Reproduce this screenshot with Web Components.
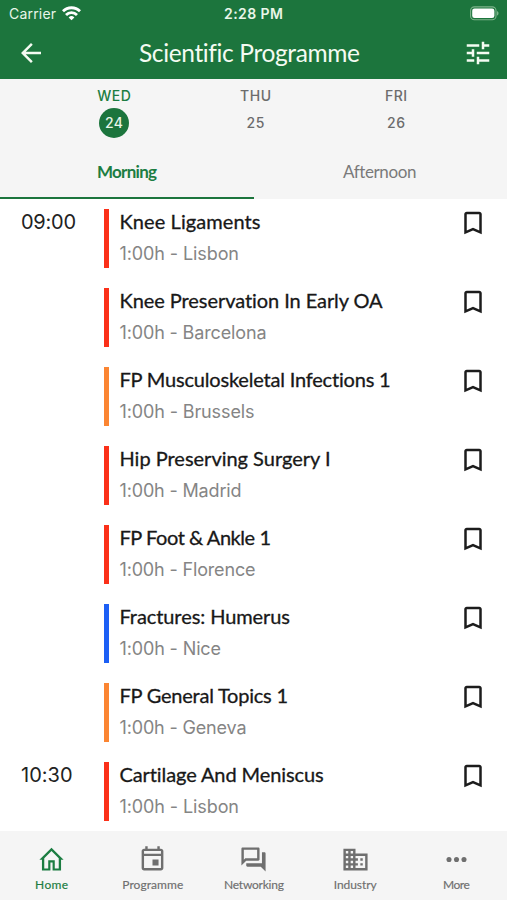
<!DOCTYPE html>
<html lang="en">
<head>
<meta charset="utf-8">
<title>Scientific Programme</title>
<style>
html,body{margin:0;height:900px;overflow:hidden;background:#fff}
body{font-family:Lato,"Liberation Sans",sans-serif}
</style>
</head>
<body>
<programme-app></programme-app>
<script>
const define = (name, html, setup) => customElements.define(name, class extends HTMLElement {
  connectedCallback() {
    if (this.shadowRoot) return;
    const root = this.attachShadow({mode: 'open'});
    root.innerHTML = typeof html === 'function' ? html(this) : html;
    if (setup) setup(this, root);
  }
});

/* A single line of text, tracked so that its advance equals the "w" attribute. */
define('fit-text', `<style>:host{display:inline-block;white-space:nowrap}span{display:inline-block;white-space:nowrap}</style><span></span>`, (el, root) => {
  const s = root.querySelector('span');
  s.textContent = el.getAttribute('text');
  const w = parseFloat(el.getAttribute('w'));
  const n = s.getBoundingClientRect().width;
  s.style.letterSpacing = ((w - n) / (s.textContent.length - 1)) + 'px';
  el.style.width = w + 'px';
});

const icons = {
  back: '<path d="M20 11H7.8l5.6-5.6L12 4l-8 8 8 8 1.4-1.4L7.8 13H20z"/>',
  tune: '<path d="M3 17v2h6v-2H3zM3 5v2h10V5H3zm10 16v-2h8v-2h-8v-2h-2v6h2zM7 9v2H3v2h4v2h2V9H7zm14 4v-2H11v2h10zm-6-4h2V7h4V5h-4V3h-2v6z"/>',
  bookmark: '<path d="M17 3H7c-1.100 0-2 .9-2 2v16l7-3 7 3V5c0-1.100-.9-2-2-2zm0 15-5-2.180L7 18V5h10v13z"/>',
  home: '<path d="M12 2.200L2 12.200h2.100V21.200h7V14.500h1.800v6.700h7V12.200H22zM12 4.900l6 6v8.500h-3.300V12.700H9.300v6.700H6V10.900z" fill-rule="evenodd"/>',
  event: '<path d="M17 12h-5v5h5v-5zM16 1v2H8V1H6v2H5c-1.110 0-1.990.9-1.990 2L3 19c0 1.100.89 2 2 2h14c1.100 0 2-.9 2-2V5c0-1.100-.9-2-2-2h-1V1h-2zm3 18H5V9h14v10zM5 7.300V5h14v2.300z" fill-rule="evenodd"/>',
  chat: '<path d="M15 4v7H5.170L4 12.170V4h11m1-2H3c-.55 0-1 .45-1 1v14l4-4h10c.55 0 1-.45 1-1V3c0-.55-.45-1-1-1zm5 4h-2v9H6v2c0 .55.45 1 1 1h11l4 4V7c0-.55-.45-1-1-1z"/>',
  business: '<path d="M12 7V3H2v18h20V7H12zM6 19H4v-2h2v2zm0-4H4v-2h2v2zm0-4H4V9h2v2zm0-4H4V5h2v2zm4 12H8v-2h2v2zm0-4H8v-2h2v2zm0-4H8V9h2v2zm0-4H8V5h2v2zm10 12h-8v-2h2v-2h-2v-2h2v-2h-2V9h8v10zm-2-8h-2v2h2v-2zm0 4h-2v2h2v-2z"/>',
  more: '<circle cx="5.800" cy="12" r="2.100"/><circle cx="12" cy="12" r="2.100"/><circle cx="18.200" cy="12" r="2.100"/>'
};
define('ui-icon', el => `<style>:host{display:block;flex:none}svg{display:block;fill:currentColor}</style>
<svg width="${el.getAttribute('size')}" height="${el.getAttribute('size')}" viewBox="0 0 24 24">${icons[el.getAttribute('name')]}</svg>`);

define('status-bar', `<style>
:host{display:grid;grid-template-columns:1fr auto 1fr;align-items:center;height:27px;padding:0 8px 0 9px;color:#e9f6e9;font:400 14px/20px Inter,sans-serif}
.l{display:flex;align-items:center;gap:6px}.r{justify-self:end}svg{display:block}.t{font-weight:600;margin-right:1px}
</style>
<div class="l"><fit-text text="Carrier" w="47"></fit-text>
<svg width="19" height="15" viewBox="0 0 19 15" fill="none" stroke="#fff" stroke-width="2.800"><path d="M1 5.300a12 12 0 0 1 17 0M4 9a7.700 7.700 0 0 1 11 0"/><path d="M9.500 14.300L6.600 11.400a4.100 4.100 0 0 1 5.800 0z" fill="#fff" stroke="none"/></svg></div>
<fit-text class="t" text="2:28 PM" w="59"></fit-text>
<svg class="r" width="29" height="15" viewBox="0 0 29 15"><rect x=".6" y=".9" width="25.400" height="12.800" rx="3.800" fill="none" stroke="#7db48b" stroke-width="1.100"/><rect x="2.200" y="2.500" width="22.200" height="9.600" rx="2.300" fill="#fff"/><path d="M27 5v4.600c2-.8 2-3.800 0-4.600z" fill="#7db48b"/></svg>`);

define('app-header', `<style>
:host{display:block;height:79px;background:#1c753d;color:#f4fbf2}
.bar{display:grid;grid-template-columns:1fr auto 1fr;align-items:center;height:52px;padding:0 14px 0 15.500px;box-sizing:border-box}
.title{font-size:24.500px;line-height:30px;margin-right:9.500px;margin-top:-1px}
.bar ui-icon{margin-top:-1px}
ui-icon:last-child{justify-self:end}
</style><status-bar></status-bar>
<div class="bar"><ui-icon name="back" size="30"></ui-icon><fit-text class="title" text="Scientific Programme" w="221"></fit-text><ui-icon name="tune" size="30"></ui-icon></div>`);

define('day-item', el => `<style>
:host{display:flex;flex-direction:column;align-items:center;width:60px;font:500 14px/18px Inter,sans-serif;color:#6c6c6c}
.num{display:grid;place-items:center;width:30px;height:30px;border-radius:50%;margin-top:2.500px}
:host([active]) .day{color:#1c7d42}
:host([active]) .num{background:#1c753d;color:#e9f6e9}
</style><fit-text class="day" text="${el.getAttribute('day')}" w="${el.getAttribute('w')}"></fit-text><div class="num"><fit-text text="${el.getAttribute('num')}" w="18"></fit-text></div>`);

define('day-picker', `<style>:host{display:flex;justify-content:space-between;padding:8px 81px 0 84px;height:61px;box-sizing:border-box}day-item:nth-of-type(2){margin-left:1px}</style>
<day-item active day="WED" num="24" w="33.500"></day-item><day-item day="THU" num="25" w="31"></day-item><day-item day="FRI" num="26" w="22"></day-item>`);

define('period-tabs', `<style>
:host{display:grid;grid-template-columns:254px 253px;height:59px;font-size:17px;line-height:22px;color:#7a7a7a}
div{display:flex;justify-content:center;padding-top:21px;box-sizing:border-box;height:59px}
div+div{padding-right:2px}
.on{color:#1c7d42;font-weight:700;border-bottom:2.500px solid #1c753d}
</style><div class="on"><fit-text text="Morning" w="60"></fit-text></div><div><fit-text text="Afternoon" w="73"></fit-text></div>`);

define('session-row', el => {
  const a = n => el.getAttribute(n);
  return `<style>
:host{display:grid;grid-template-columns:83px 5px 1fr auto;height:79px;box-sizing:border-box;padding:9.500px 19.500px 0 21px}
.time{font:400 20px/26px Inter,sans-serif;color:#222}
.mark{height:59.500px;background:${a('color')}}
.body{display:flex;flex-direction:column;align-items:flex-start;padding-left:10.500px}
.name{font-size:20px;line-height:26px;color:#181818;-webkit-text-stroke:.3px #181818;margin-top:-1px}
.meta{font:400 18px/24px Inter,sans-serif;color:#858585;margin-top:8px}
ui-icon{color:#1c1c1c;margin-top:-.5px}
</style><div class="time">${a('time') ? `<fit-text text="${a('time')}" w="${a('tw')}"></fit-text>` : ''}</div><div class="mark"></div>
<div class="body"><fit-text class="name" text="${a('name').replace('&','&amp;')}" w="${a('w')}"></fit-text><fit-text class="meta" text="1:00h - ${a('city')}" w="${a('cw')}"></fit-text></div>
<ui-icon name="bookmark" size="30"></ui-icon>`;
});

define('session-list', () => {
  const R = '#fb3019', O = '#fb8532', B = '#1c5ff5';
  return `<style>:host{display:block;height:632px;overflow:hidden;background:#fff}</style>` + [
    [R,'Knee Ligaments',141,'Lisbon',119.5,'09:00',55],
    [R,'Knee Preservation In Early OA',263.5,'Barcelona',147],
    [O,'FP Musculoskeletal Infections 1',271.5,'Brussels',135],
    [R,'Hip Preserving Surgery I',211,'Madrid',122],
    [R,'FP Foot &amp; Ankle 1',151.5,'Florence',136],
    [B,'Fractures: Humerus',170.5,'Nice',101.5],
    [O,'FP General Topics 1',168.5,'Geneva',127],
    [R,'Cartilage And Meniscus',204.5,'Lisbon',119.5,'10:30',51.5]
  ].map(([c,n,w,city,cw,t='',tw='']) => `<session-row color="${c}" name="${n}" w="${w}" city="${city}" cw="${cw}" time="${t}" tw="${tw}"></session-row>`).join('');
});

define('nav-item', el => `<style>
:host{display:flex;flex-direction:column;align-items:center;padding-top:14px;color:#6f6f6f;font-size:12px;line-height:16px}
:host([active]){color:#1c7d42}
fit-text{margin-top:3px;-webkit-text-stroke:.15px currentColor}
</style><ui-icon name="${el.getAttribute('icon')}" size="29"></ui-icon><fit-text text="${el.getAttribute('label')}" w="${el.getAttribute('w')}"></fit-text>`);

define('bottom-nav', `<style>:host{display:grid;grid-template-columns:repeat(5,1fr);height:69px;box-sizing:border-box;padding-left:1px;background:#f5f5f5}</style>
<nav-item active icon="home" label="Home" w="33"></nav-item><nav-item icon="event" label="Programme" w="61"></nav-item><nav-item icon="chat" label="Networking" w="60"></nav-item><nav-item icon="business" label="Industry" w="43"></nav-item><nav-item icon="more" label="More" w="27"></nav-item>`);

define('programme-app', `<style>:host{display:flex;flex-direction:column;width:507px;height:900px}.top{background:#f5f5f5;height:120px}</style>
<app-header></app-header><div class="top"><day-picker></day-picker><period-tabs></period-tabs></div><session-list></session-list><bottom-nav></bottom-nav>`);
</script>
</body>
</html>
